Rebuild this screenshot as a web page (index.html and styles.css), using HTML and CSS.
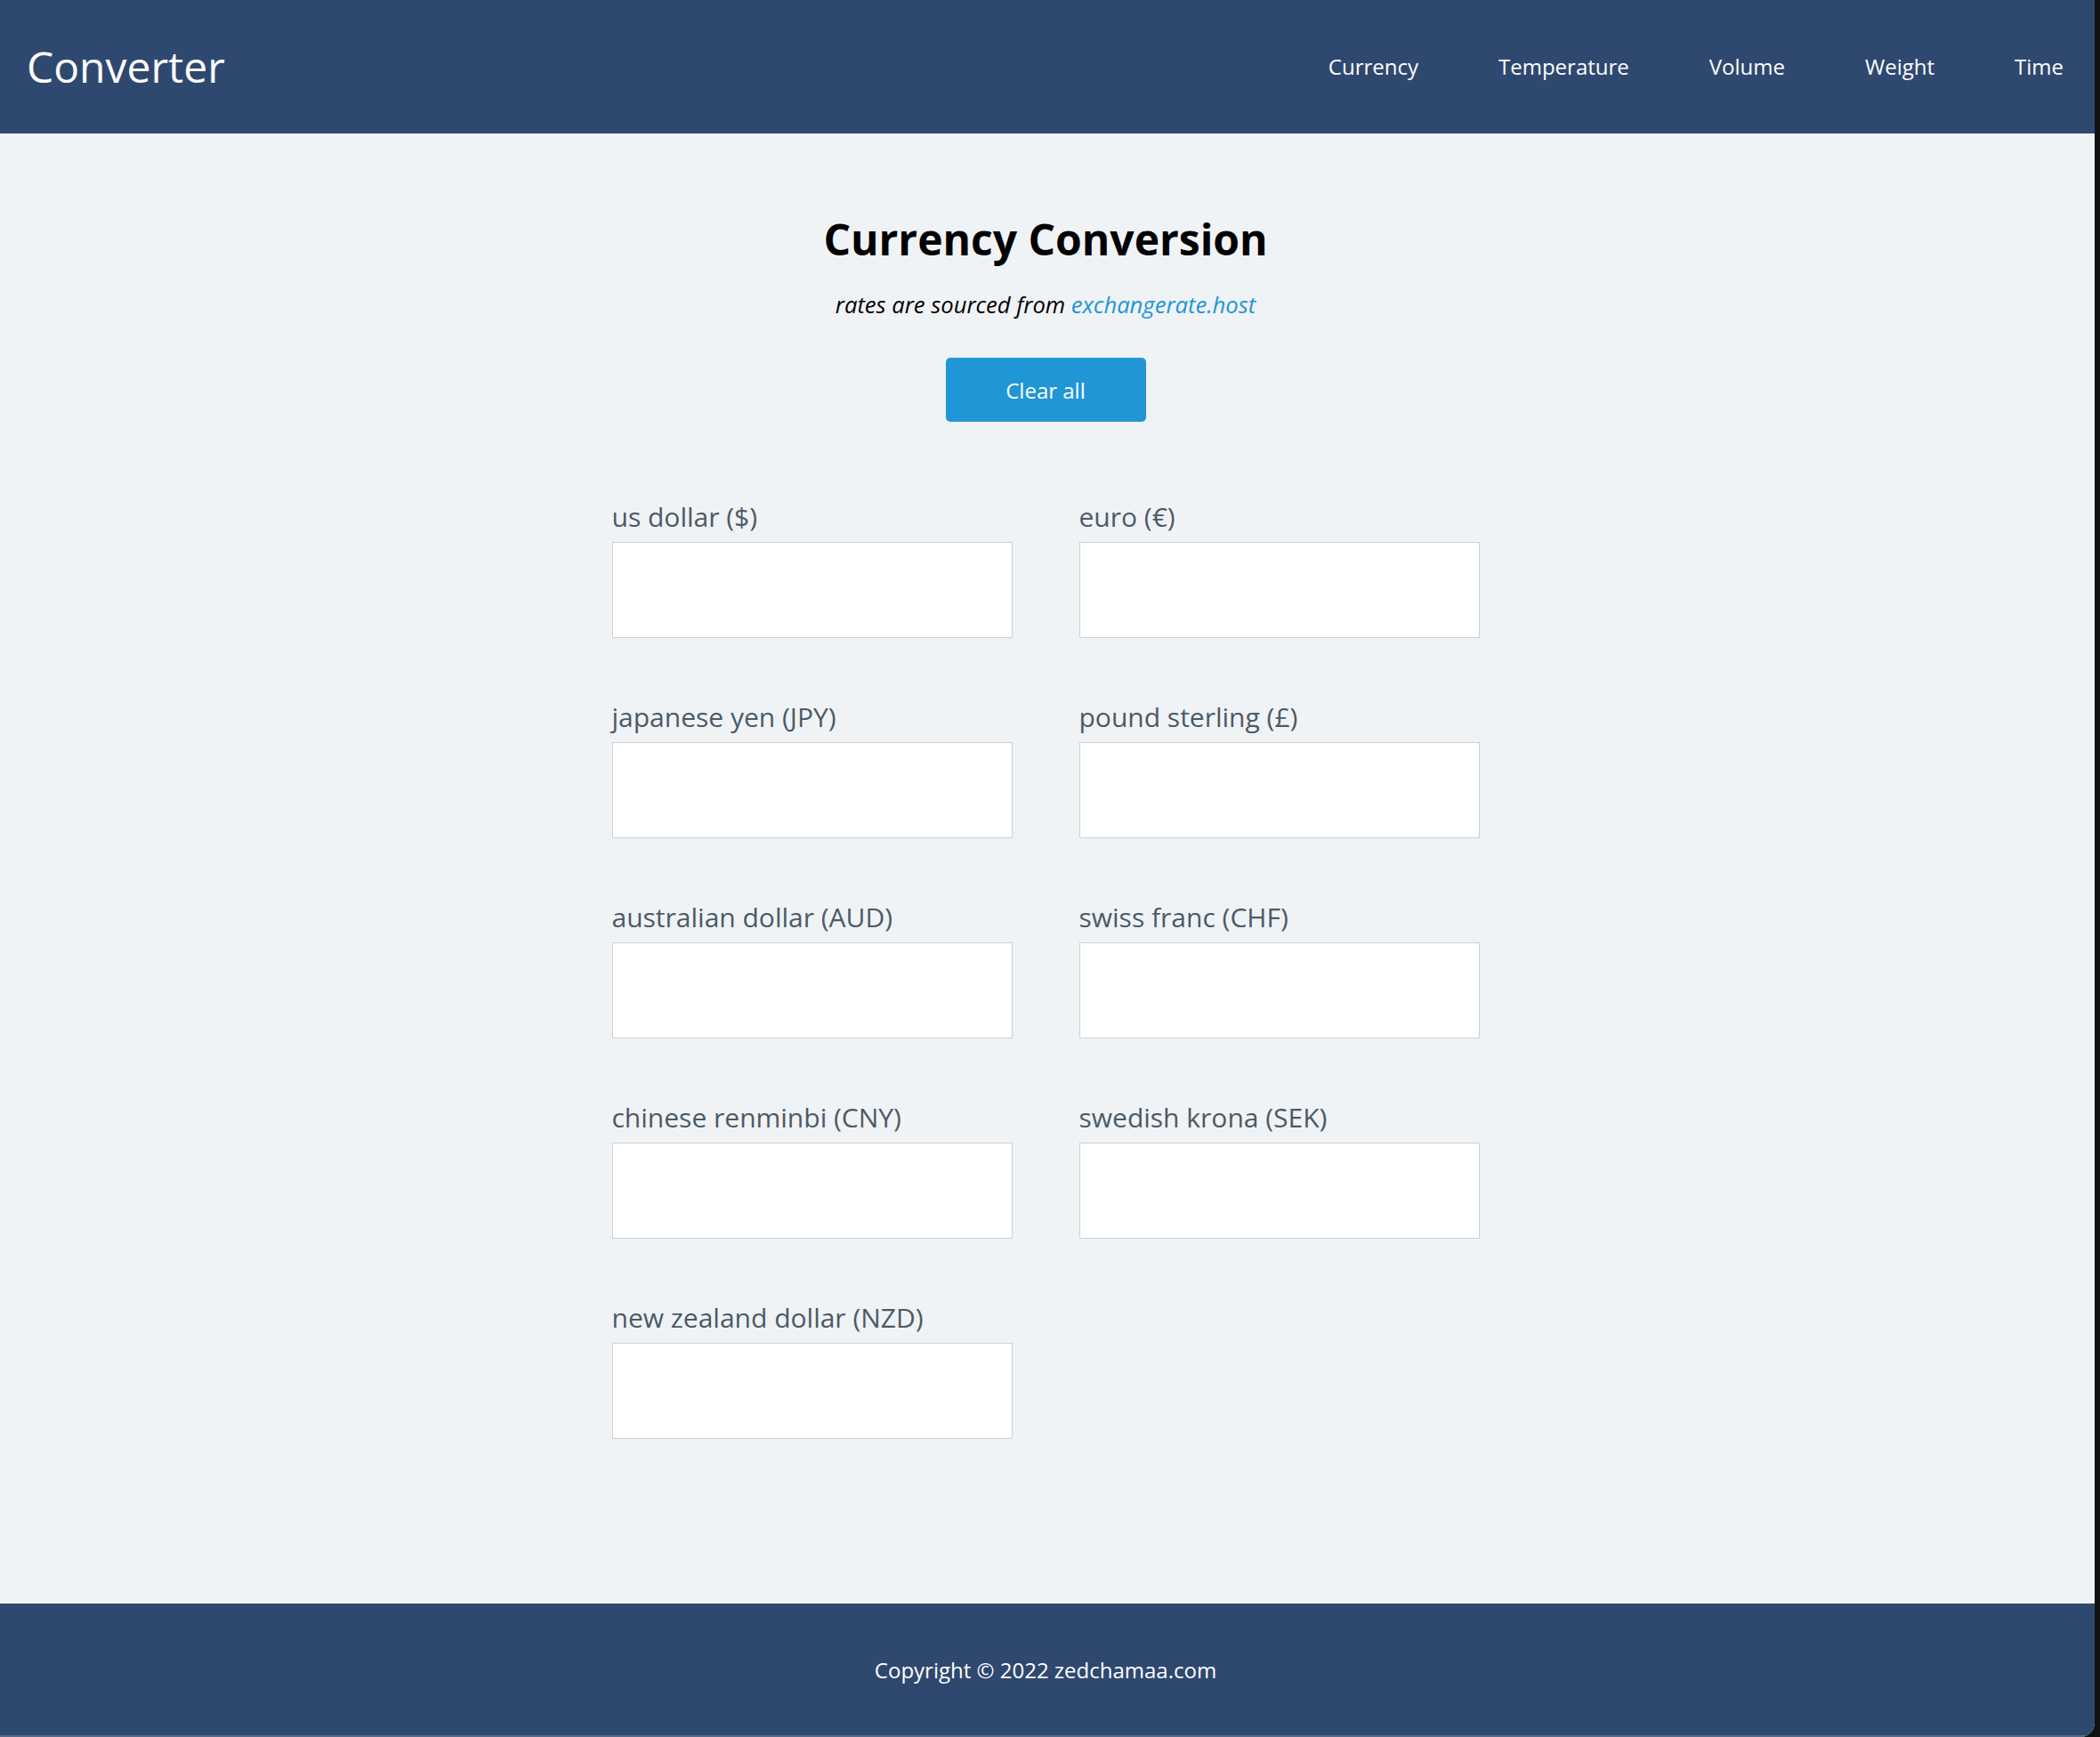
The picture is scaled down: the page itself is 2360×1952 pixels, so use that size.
FILE: index.html
```html
<!DOCTYPE html>
<html lang="en">
<head>
<meta charset="utf-8">
<title>Converter</title>
<link rel="stylesheet" href="styles.css">
</head>
<body>
<div class="window">
  <header class="topbar">
    <a class="logo" href="#">Converter</a>
    <nav class="nav">
      <a href="#">Currency</a>
      <a href="#">Temperature</a>
      <a href="#">Volume</a>
      <a href="#">Weight</a>
      <a href="#">Time</a>
    </nav>
  </header>
  <main class="main">
    <h1 class="title">Currency Conversion</h1>
    <p class="subtitle">rates are sourced from <a href="#">exchangerate.host</a></p>
    <button class="clear-btn" type="button">Clear all</button>
    <form class="grid">
      <div class="field"><label>us dollar ($)</label><input type="text"></div>
      <div class="field"><label>euro (€)</label><input type="text"></div>
      <div class="field"><label>japanese yen (JPY)</label><input type="text"></div>
      <div class="field"><label>pound sterling (£)</label><input type="text"></div>
      <div class="field"><label>australian dollar (AUD)</label><input type="text"></div>
      <div class="field"><label>swiss franc (CHF)</label><input type="text"></div>
      <div class="field"><label>chinese renminbi (CNY)</label><input type="text"></div>
      <div class="field"><label>swedish krona (SEK)</label><input type="text"></div>
      <div class="field"><label>new zealand dollar (NZD)</label><input type="text"></div>
    </form>
  </main>
  <footer class="footer">Copyright © 2022 zedchamaa.com</footer>
</div>
</body>
</html>
```

FILE: styles.css
```css
* { box-sizing: border-box; }
html, body {
  margin: 0;
  padding: 0;
  background: #111214;
}
body {
  font-family: "Open Sans", "DejaVu Sans", sans-serif;
}
.window {
  width: calc(100% - 6px);
  min-height: 100vh;
  display: flex;
  flex-direction: column;
  background: #f0f3f6;
  border-bottom-right-radius: 16px;
  overflow: hidden;
}
.topbar {
  height: 150px;
  background: #2f4870;
  display: flex;
  align-items: center;
  justify-content: space-between;
  padding: 0 35px 0 30px;
}
.logo {
  color: #fff;
  text-decoration: none;
  font-size: 48px;
  line-height: 64px;
}
.nav {
  display: flex;
  gap: 90px;
}
.nav a {
  color: #fff;
  text-decoration: none;
  font-size: 24px;
  line-height: 32px;
}
.main {
  flex: 1;
  display: flex;
  flex-direction: column;
  align-items: center;
  padding: 87px 4px 185px 0;
}
.title {
  margin: 0;
  font-size: 48px;
  line-height: 64px;
  font-weight: 700;
  color: #000;
}
.subtitle {
  margin: 25px 0 0;
  font-size: 25.6px;
  line-height: 34px;
  font-style: italic;
  color: #000;
}
.subtitle a {
  color: #2196d6;
  text-decoration: none;
}
.clear-btn {
  margin-top: 42px;
  width: 225px;
  height: 72px;
  border: none;
  border-radius: 5px;
  background: #2196d6;
  color: #fff;
  font-family: "Open Sans", "DejaVu Sans", sans-serif;
  font-size: 24px;
  cursor: pointer;
}
.grid {
  margin-top: 84px;
  display: grid;
  grid-template-columns: 450px 450px;
  column-gap: 75px;
  row-gap: 66px;
}
.field {
  display: flex;
  flex-direction: column;
}
.field label {
  font-size: 30px;
  line-height: 45px;
  color: #4b5a66;
  margin-bottom: 6px;
}
.field input {
  height: 108px;
  width: 100%;
  border: 1px solid #cdd1d4;
  background: #fff;
  font-family: "Open Sans", "DejaVu Sans", sans-serif;
  font-size: 30px;
  padding: 0 16px;
  outline: none;
}
.footer {
  height: 150px;
  background: #2f4870;
  color: #fff;
  font-size: 24px;
  display: flex;
  align-items: center;
  justify-content: center;
  padding: 0 4px 2px 0;
  box-shadow: inset 0 -2px 0 #566a8c;
}
```
